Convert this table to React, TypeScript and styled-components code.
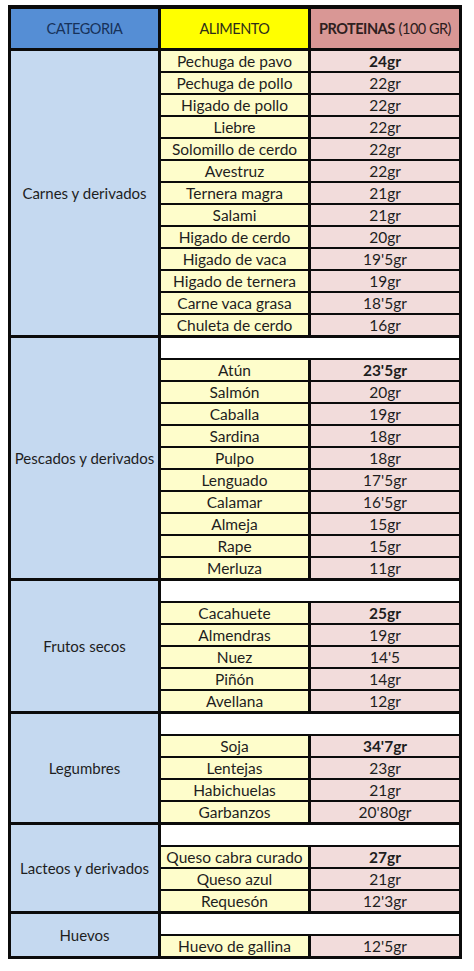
import { createGlobalStyle, styled } from "styled-components";

type Item = { food: string; value: string };
type Group = { name: string; items: Item[]; blank?: boolean; boldFirst?: boolean };

const groups: Group[] = [
  {
    name: "Carnes y derivados",
    boldFirst: true,
    items: [
      { food: "Pechuga de pavo", value: "24gr" },
      { food: "Pechuga de pollo", value: "22gr" },
      { food: "Higado de pollo", value: "22gr" },
      { food: "Liebre", value: "22gr" },
      { food: "Solomillo de cerdo", value: "22gr" },
      { food: "Avestruz", value: "22gr" },
      { food: "Ternera magra", value: "21gr" },
      { food: "Salami", value: "21gr" },
      { food: "Higado de cerdo", value: "20gr" },
      { food: "Higado de vaca", value: "19'5gr" },
      { food: "Higado de ternera", value: "19gr" },
      { food: "Carne vaca grasa", value: "18'5gr" },
      { food: "Chuleta de cerdo", value: "16gr" },
    ],
  },
  {
    name: "Pescados y derivados",
    blank: true,
    boldFirst: true,
    items: [
      { food: "Atún", value: "23'5gr" },
      { food: "Salmón", value: "20gr" },
      { food: "Caballa", value: "19gr" },
      { food: "Sardina", value: "18gr" },
      { food: "Pulpo", value: "18gr" },
      { food: "Lenguado", value: "17'5gr" },
      { food: "Calamar", value: "16'5gr" },
      { food: "Almeja", value: "15gr" },
      { food: "Rape", value: "15gr" },
      { food: "Merluza", value: "11gr" },
    ],
  },
  {
    name: "Frutos secos",
    blank: true,
    boldFirst: true,
    items: [
      { food: "Cacahuete", value: "25gr" },
      { food: "Almendras", value: "19gr" },
      { food: "Nuez", value: "14'5" },
      { food: "Piñón", value: "14gr" },
      { food: "Avellana", value: "12gr" },
    ],
  },
  {
    name: "Legumbres",
    blank: true,
    boldFirst: true,
    items: [
      { food: "Soja", value: "34'7gr" },
      { food: "Lentejas", value: "23gr" },
      { food: "Habichuelas", value: "21gr" },
      { food: "Garbanzos", value: "20'80gr" },
    ],
  },
  {
    name: "Lacteos y derivados",
    blank: true,
    boldFirst: true,
    items: [
      { food: "Queso cabra curado", value: "27gr" },
      { food: "Queso azul", value: "21gr" },
      { food: "Requesón", value: "12'3gr" },
    ],
  },
  {
    name: "Huevos",
    blank: true,
    items: [{ food: "Huevo de gallina", value: "12'5gr" }],
  },
];

const GlobalStyle = createGlobalStyle`
  body {
    margin: 0;
    background: #ffffff;
    font-family: Lato, "Liberation Sans", sans-serif;
  }
`;

const Page = styled.div`
  padding: 5px 0 0 8px;
`;

const Table = styled.div`
  width: 454px;
  box-sizing: border-box;
  background: #0b0b0b;
  padding: 4px 3px 3px 3px;
  display: flex;
  flex-direction: column;
  gap: 3px;
`;

const Columns = styled.div`
  display: grid;
  grid-template-columns: 147px 147px 148px;
  column-gap: 3px;
`;

const HeaderRow = styled(Columns)`
  height: 39px;
`;

const HeadCell = styled.div<{ $bg: string; $color: string }>`
  background: ${(p) => p.$bg};
  color: ${(p) => p.$color};
  display: flex;
  align-items: center;
  justify-content: center;
  font-size: 14.5px;
  letter-spacing: -0.5px;
  white-space: nowrap;

  b {
    font-weight: 700;
    margin-right: 4px;
  }
`;

const Section = styled(Columns)`
  row-gap: 2px;
  grid-auto-rows: 20px;
`;

const Category = styled.div<{ $rows: number }>`
  grid-column: 1;
  grid-row: 1 / span ${(p) => p.$rows};
  background: #c5d9f0;
  color: #1e1e1e;
  display: flex;
  align-items: center;
  justify-content: center;
  font-size: 15px;
  white-space: nowrap;
`;

const Blank = styled.div`
  grid-column: 2 / span 2;
  background: #ffffff;
`;

const Cell = styled.div<{ $bg: string; $bold?: boolean }>`
  background: ${(p) => p.$bg};
  color: #1e1e1e;
  display: flex;
  align-items: center;
  justify-content: center;
  padding-top: 1px;
  font-size: 15.5px;
  font-weight: ${(p) => (p.$bold ? 700 : 400)};
  white-space: nowrap;
  line-height: 1;
`;

export default function App() {
  return (
    <Page>
      <GlobalStyle />
      <Table>
        <HeaderRow>
          <HeadCell $bg="#558ed5" $color="#17325a">CATEGORIA</HeadCell>
          <HeadCell $bg="#ffff00" $color="#2e2e1a">ALIMENTO</HeadCell>
          <HeadCell $bg="#d99795" $color="#2e2020">
            <b>PROTEINAS</b>(100 GR)
          </HeadCell>
        </HeaderRow>
        {groups.map((g) => {
          const rows = g.items.length + (g.blank ? 1 : 0);
          return (
            <Section key={g.name}>
              <Category $rows={rows}>{g.name}</Category>
              {g.blank && <Blank />}
              {g.items.map((it, i) => [
                <Cell key={it.food} $bg="#fefdcb">
                  {it.food}
                </Cell>,
                <Cell
                  key={it.food + "-v"}
                  $bg="#f2dcdb"
                  $bold={g.boldFirst && i === 0}
                >
                  {it.value}
                </Cell>,
              ])}
            </Section>
          );
        })}
      </Table>
    </Page>
  );
}
